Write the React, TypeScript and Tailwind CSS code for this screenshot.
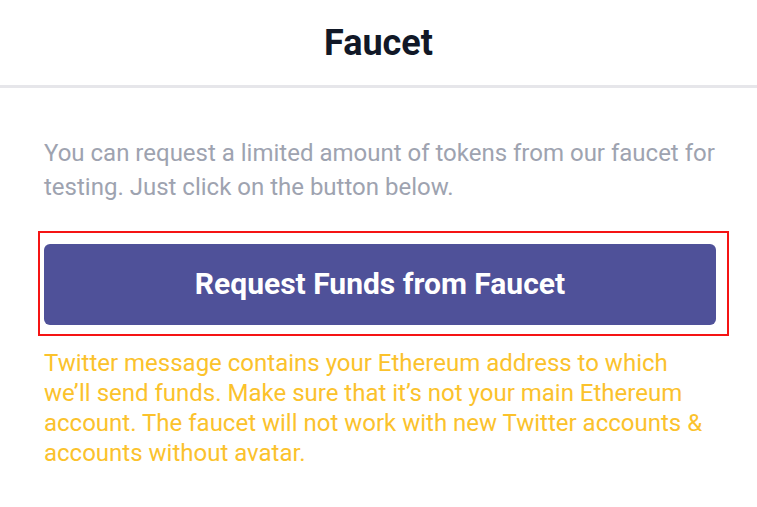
export default function App() {
  return (
    <div className="min-h-screen w-full bg-white font-['Roboto',sans-serif]">
      <header className="flex h-[88px] items-center justify-center border-b-[3px] border-[#e6e6ea]">
        <h1 className="text-[36px] font-bold leading-none text-[#111827]">Faucet</h1>
      </header>

      <main className="pl-[44px] pr-[41px] pt-[48px]">
        <p className="text-[24px] leading-[34px] text-[#9ea3b0]">
          You can request a limited amount of tokens from our faucet for testing. Just click on the
          button below.
        </p>

        <div className="relative mt-[40px]">
          <button className="flex h-[81px] w-full items-center justify-center rounded-[6px] bg-[#4f5199] pb-[2px] text-[30px] font-bold text-white">
            Request Funds from Faucet
          </button>
          <div className="pointer-events-none absolute -bottom-[11px] -left-[6px] -right-[13px] -top-[13px] border-2 border-[#f51414]" />
        </div>

        <p className="mt-[23px] text-[24px] leading-[30px] text-[#fbc22c]">
          Twitter message contains your Ethereum address to which we’ll send funds. Make sure that
          it’s not your main Ethereum account. The faucet will not work with new Twitter accounts
          &amp; accounts without avatar.
        </p>
      </main>
    </div>
  );
}
